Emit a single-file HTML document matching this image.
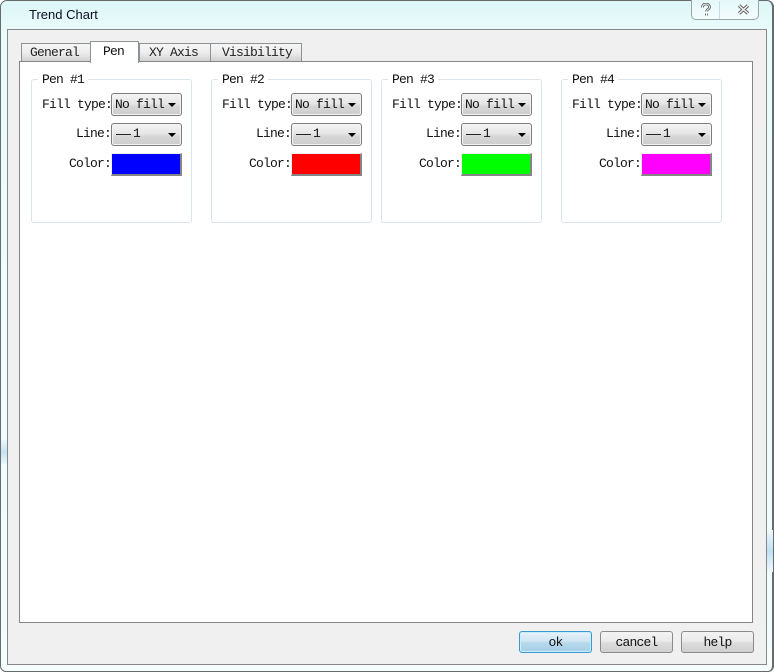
<!DOCTYPE html>
<html><head><meta charset="utf-8"><style>
html,body{margin:0;padding:0;width:774px;height:672px;overflow:hidden;background:#fff}
*{box-sizing:border-box}
div{position:absolute}
.t{font-family:"Liberation Mono",monospace;font-size:13px;letter-spacing:-.8px;color:#111;white-space:pre;line-height:14px}
.tab{background:linear-gradient(#f6f6f6,#ececec 50%,#cdcdcd);border:1px solid #8d9296;border-bottom:none;height:19px;top:43px}
.grp{border:1px solid #dbe4e8;border-radius:3px;top:79px;width:161px;height:144px;background:#fff}
.lg{background:#fff;top:73px;height:14px;padding:0 4px}
.cb{width:71px;height:23px;border:1px solid #7c7c7c;border-radius:3px;background:linear-gradient(#f4f4f4,#e6e6e6 45%,#d6d6d6 60%,#cdcdcd);box-shadow:inset 0 0 0 1px #f4f4f4}
.ar{width:0;height:0;border-left:4px solid transparent;border-right:4px solid transparent;border-top:4px solid #000;left:56px;top:9px}
.sw{width:71px;height:23px;border-right:2px solid #858585;border-bottom:2px solid #858585;border-left:1px solid #eee;border-top:1px solid #eee}
.btn{height:22px;top:631px;border:1px solid #8b8b8b;border-radius:3px;background:linear-gradient(#f3f3f3,#ebebeb 45%,#dcdcdc 55%,#d0d0d0);text-align:center}
</style></head><body>
<div style="left:0;top:0;width:774px;height:672px;border:1px solid #666c6c;border-right-width:2px;border-radius:7px 7px 6px 6px;background:linear-gradient(#dcf6f8,#e9fbfb 30px,#f2fcfd 90%,#f6fdfd)"></div>
<div style="left:1px;top:440px;width:6px;height:24px;background:linear-gradient(#e8f7fa,#c4e4f2 50%,#e8f7fa)"></div>
<div style="left:767px;top:530px;width:6px;height:42px;background:linear-gradient(#f0f9fc,#bfe0f3 50%,#f0f9fc)"></div>
<div style="left:29px;top:7px;font:13px/15px 'Liberation Sans',sans-serif;color:#0c1020;white-space:pre">Trend Chart</div>

<div style="left:691px;top:0;width:68px;height:20px;border:1px solid #9aa5a8;border-top:none;border-radius:0 0 5px 5px;background:linear-gradient(#e6f8fa,#f3fcfd)"></div>
<div style="left:719px;top:1px;width:1px;height:18px;background:#c8dbe0"></div>
<svg style="position:absolute;left:700px;top:3px" width="12" height="14" viewBox="0 0 12 14"><path d="M2.500 4.500C2.500 2 4 1 6 1s3.500 1.200 3.500 3.200C9.500 6.200 6.500 6.500 6.500 8.500M6.500 10.500v2" fill="none" stroke="#555" stroke-width="2.600"/><path d="M2.500 4.500C2.500 2 4 1 6 1s3.500 1.200 3.500 3.200C9.500 6.200 6.500 6.500 6.500 8.500M6.500 10.500v2" fill="none" stroke="#f4f4f4" stroke-width="1"/></svg>
<svg style="position:absolute;left:737px;top:4px" width="13" height="11" viewBox="0 0 13 11"><path d="M2 1.500l9 8M11 1.500l-9 8" fill="none" stroke="#666" stroke-width="3.400"/><path d="M2 1.500l9 8M11 1.500l-9 8" fill="none" stroke="#f2f2f2" stroke-width="1.400"/></svg>

<div style="left:7px;top:29px;width:760px;height:636px;border:1px solid #888;background:#f0f0f0"></div>

<div class="tab" style="left:21px;width:70px"></div>
<div class="tab" style="left:139px;width:72px"></div>
<div class="tab" style="left:210px;width:92px"></div>
<div style="left:19px;top:61px;width:734px;height:562px;border:1px solid #858585;background:#fff"></div>
<div style="left:90px;top:41px;width:49px;height:22px;border:1px solid #8d9296;border-bottom:none;background:#fff"></div>
<div class="t" style="left:30px;top:46px;color:#222">General</div>
<div class="t" style="left:103px;top:45px">Pen</div>
<div class="t" style="left:149px;top:46px;color:#222">XY Axis</div>
<div class="t" style="left:222px;top:46px;color:#222">Visibility</div>

<div class="grp" style="left:31px"></div>
<div class="t lg" style="left:38px">Pen #1</div>
<div class="t" style="left:42px;top:98px">Fill type:</div>
<div class="cb" style="left:111px;top:93px"><div class="t" style="left:3px;top:4px">No fill</div><div class="ar"></div></div>
<div class="t" style="left:76px;top:127px">Line:</div>
<div class="cb" style="left:111px;top:123px"><div style="left:4px;top:10px;width:15px;height:1px;background:#222"></div><div class="t" style="left:21px;top:3px">1</div><div class="ar"></div></div>
<div class="t" style="left:69px;top:157px">Color:</div>
<div class="sw" style="left:111px;top:153px;background:#0000ff"></div>

<div class="grp" style="left:211px"></div>
<div class="t lg" style="left:218px">Pen #2</div>
<div class="t" style="left:222px;top:98px">Fill type:</div>
<div class="cb" style="left:291px;top:93px"><div class="t" style="left:3px;top:4px">No fill</div><div class="ar"></div></div>
<div class="t" style="left:256px;top:127px">Line:</div>
<div class="cb" style="left:291px;top:123px"><div style="left:4px;top:10px;width:15px;height:1px;background:#222"></div><div class="t" style="left:21px;top:3px">1</div><div class="ar"></div></div>
<div class="t" style="left:249px;top:157px">Color:</div>
<div class="sw" style="left:291px;top:153px;background:#ff0000"></div>

<div class="grp" style="left:381px"></div>
<div class="t lg" style="left:388px">Pen #3</div>
<div class="t" style="left:392px;top:98px">Fill type:</div>
<div class="cb" style="left:461px;top:93px"><div class="t" style="left:3px;top:4px">No fill</div><div class="ar"></div></div>
<div class="t" style="left:426px;top:127px">Line:</div>
<div class="cb" style="left:461px;top:123px"><div style="left:4px;top:10px;width:15px;height:1px;background:#222"></div><div class="t" style="left:21px;top:3px">1</div><div class="ar"></div></div>
<div class="t" style="left:419px;top:157px">Color:</div>
<div class="sw" style="left:461px;top:153px;background:#00ff00"></div>

<div class="grp" style="left:561px"></div>
<div class="t lg" style="left:568px">Pen #4</div>
<div class="t" style="left:572px;top:98px">Fill type:</div>
<div class="cb" style="left:641px;top:93px"><div class="t" style="left:3px;top:4px">No fill</div><div class="ar"></div></div>
<div class="t" style="left:606px;top:127px">Line:</div>
<div class="cb" style="left:641px;top:123px"><div style="left:4px;top:10px;width:15px;height:1px;background:#222"></div><div class="t" style="left:21px;top:3px">1</div><div class="ar"></div></div>
<div class="t" style="left:599px;top:157px">Color:</div>
<div class="sw" style="left:641px;top:153px;background:#ff00ff"></div>

<div class="btn t" style="left:519px;width:73px;border:1px solid #3a9ad0;box-shadow:inset 0 0 0 1px #c8eefa;background:linear-gradient(#e6f3fa,#cfe6f3 45%,#b8d9ec 55%,#a6cfe8);line-height:21px">ok</div>
<div class="btn t" style="left:600px;width:73px;line-height:21px">cancel</div>
<div class="btn t" style="left:681px;width:73px;line-height:21px">help</div>
</body></html>
